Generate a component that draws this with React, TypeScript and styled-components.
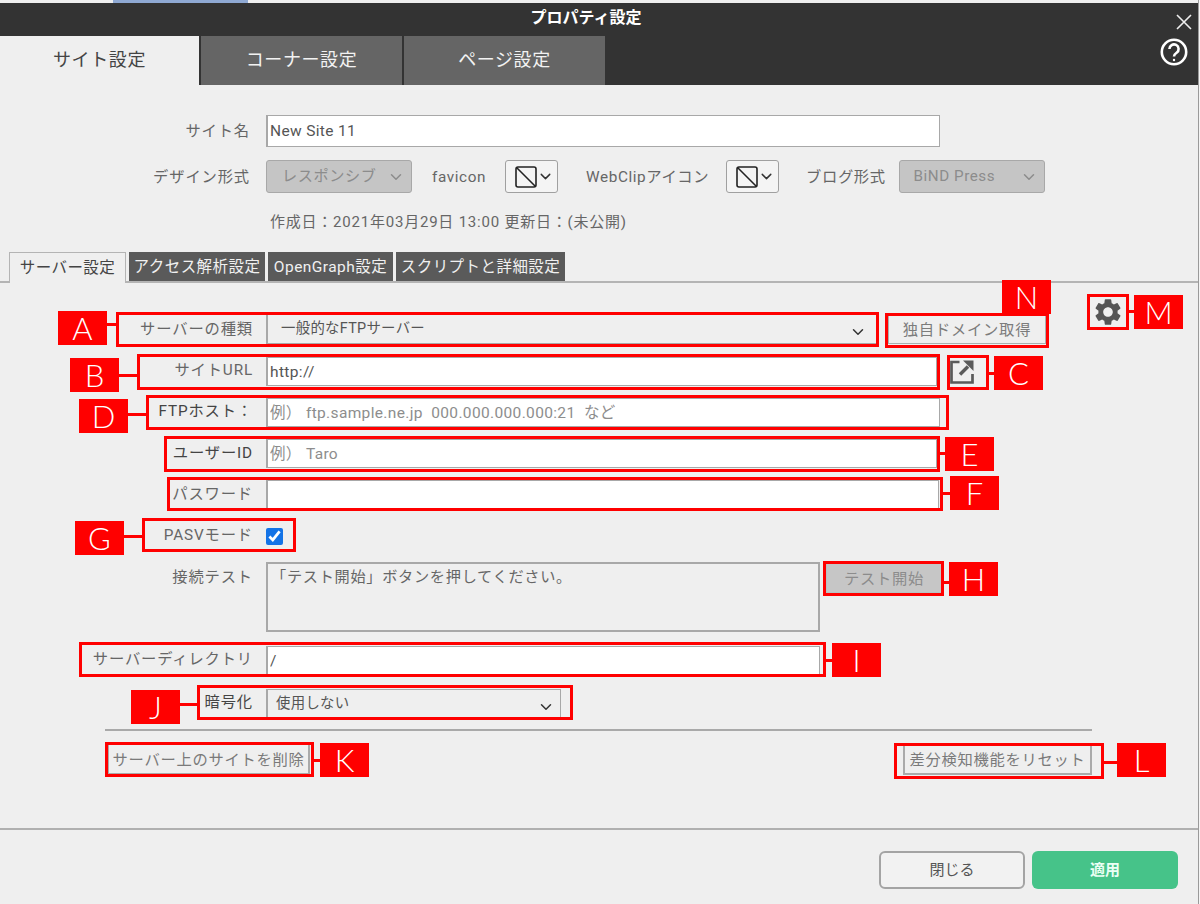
import React, { FC } from "react";
import styled, { createGlobalStyle } from "styled-components";
import { ChevronDown } from "lucide-react";
import { MdSettings } from "react-icons/md";

const FONT = `Roboto, "Noto Sans CJK JP", "Noto Sans", sans-serif`;

const GlobalStyle = createGlobalStyle`
  html, body {
    margin: 0;
    padding: 0;
    background: #f4f4f4;
  }
  * {
    box-sizing: border-box;
  }
`;

const Page = styled.div`
  position: relative;
  width: 1199px;
  height: 904px;
  overflow: hidden;
  background: #efefef;
  border-right: 1px solid #9a9a9a;
  font-family: ${FONT};
  font-size: 15px;
  color: #555;
`;

const TopStrip = styled.div`
  height: 3px;
  background: #efefef;
  padding-left: 113px;
`;

const StripMark = styled.div`
  width: 135px;
  height: 100%;
  background: #8fa9d3;
`;

const Header = styled.header`
  height: 82px;
  background: #333;
`;

const TitleRow = styled.div`
  height: 33px;
  display: grid;
  grid-template-columns: 1fr auto 1fr;
  align-items: center;
  padding-right: 6px;
`;

const Title = styled.div`
  color: #fff;
  font-size: 16px;
  font-weight: 700;
  line-height: 20px;
  padding-bottom: 4px;
  margin-left: -20px;
`;

const CloseIcon = styled.svg`
  justify-self: end;
  width: 16px;
  height: 16px;
  margin-top: 5px;
`;

const TabRow = styled.div`
  height: 49px;
  display: flex;
  gap: 2px;
`;

const MainTab = styled.div<{ $active?: boolean }>`
  width: ${(p) => (p.$active ? 199 : 201)}px;
  display: flex;
  align-items: center;
  justify-content: center;
  padding-bottom: 5px;
  font-size: 18px;
  letter-spacing: 0.6px;
  background: ${(p) => (p.$active ? "#efefef" : "#656565")};
  color: ${(p) => (p.$active ? "#444" : "#f2f2f2")};
`;

const HelpIcon = styled.svg`
  width: 28px;
  height: 28px;
  margin: 2px 10px 0 auto;
`;

const SiteSection = styled.section`
  padding-top: 30px;
  height: 167px;
`;

const Field = styled.div<{ $top?: number }>`
  display: grid;
  grid-template-columns: 250px 1fr;
  column-gap: 16px;
  align-items: center;
  margin-top: ${(p) => p.$top ?? 0}px;
`;

const PanelField = styled(Field)`
  grid-template-columns: 253px 1fr;
  column-gap: 13px;
`;

const Label = styled.label<{ $dark?: boolean; $start?: boolean; $lift?: number }>`
  text-align: right;
  white-space: nowrap;
  font-size: 15.3px;
  line-height: 18px;
  letter-spacing: 0.85px;
  padding-bottom: ${(p) => p.$lift ?? 4}px;
  align-self: ${(p) => (p.$start ? "start" : "auto")};
  padding-top: ${(p) => (p.$start ? 6 : 0)}px;
  color: ${(p) => (p.$dark ? "#444" : "#666")};
`;

const TextInput = styled.input<{ $w: number; $h?: number }>`
  display: block;
  width: ${(p) => p.$w}px;
  height: ${(p) => p.$h ?? 29}px;
  padding: 0 2px;
  background: #fff;
  border: 1px solid #a8a8a8;
  border-left-width: 2px;
  border-radius: 0;
  outline: none;
  font-family: ${FONT};
  font-size: 15.5px;
  letter-spacing: 0.35px;
  color: #555;

  &::placeholder {
    color: #8d8d8d;
    opacity: 1;
  }
`;

const Controls = styled.div`
  display: flex;
  align-items: center;
`;

const InlineLabel = styled.span<{ $left: number }>`
  margin-left: ${(p) => p.$left}px;
  white-space: nowrap;
  font-size: 15.3px;
  line-height: 18px;
  letter-spacing: 0.6px;
  color: #666;
`;

const SelectBox = styled.div<{ $w: number; $h?: number; $disabled?: boolean; $pad?: number; $left?: number; $end?: number }>`
  display: flex;
  align-items: center;
  justify-content: space-between;
  flex: none;
  width: ${(p) => p.$w}px;
  height: ${(p) => p.$h ?? 30}px;
  margin-left: ${(p) => p.$left ?? 0}px;
  padding: 0 ${(p) => p.$end ?? (p.$disabled ? 6 : 10)}px 0 ${(p) => p.$pad ?? 13}px;
  background: ${(p) => (p.$disabled ? "#c5c5c5" : "#efefef")};
  border: 1px solid #a8a8a8;
  border-left-width: ${(p) => (p.$disabled ? 1 : 2)}px;
  border-radius: ${(p) => (p.$disabled ? 3 : 0)}px;
  font-size: ${(p) => (p.$disabled ? 15.2 : 14.4)}px;
  letter-spacing: ${(p) => (p.$disabled ? 0.55 : 0.3)}px;
  color: ${(p) => (p.$disabled ? "#8c8c8c" : "#555")};

  span {
    line-height: 18px;
    padding-bottom: ${(p) => (p.$disabled ? 2 : 0)}px;
  }

  svg {
    margin-top: ${(p) => (p.$disabled ? 1 : 5)}px;
  }
`;

const IconSelect = styled.div<{ $left: number }>`
  display: flex;
  align-items: center;
  justify-content: space-between;
  flex: none;
  width: 53px;
  height: 33px;
  margin-left: ${(p) => p.$left}px;
  padding: 0 3px 0 9px;
  background: #f4f4f4;
  border: 1px solid #a0a0a0;
  border-radius: 3px;
`;

const Swatch = styled.svg`
  width: 22px;
  height: 22px;
`;

const DateLine = styled.div`
  margin: 17px 0 0 270px;
  font-size: 15px;
  letter-spacing: 0.78px;
  color: #666;
`;

const SubTabRow = styled.nav`
  height: 31px;
  display: flex;
  align-items: flex-end;
  padding-left: 9px;
  border-bottom: 2px solid #b4b4b4;
`;

const SubTab = styled.div<{ $w: number; $active?: boolean; $gap?: number }>`
  display: flex;
  align-items: center;
  justify-content: center;
  width: ${(p) => p.$w}px;
  height: ${(p) => (p.$active ? 31 : 29)}px;
  margin-left: ${(p) => p.$gap ?? 3}px;
  margin-bottom: ${(p) => (p.$active ? -2 : 0)}px;
  padding-bottom: 4px;
  white-space: nowrap;
  font-size: 15.5px;
  letter-spacing: 0.45px;
  background: ${(p) => (p.$active ? "#efefef" : "#5a5a5a")};
  color: ${(p) => (p.$active ? "#444" : "#f0f0f0")};
  border: ${(p) => (p.$active ? "1px solid #b4b4b4" : "none")};
  border-bottom: none;
`;

const ServerPanel = styled.section`
  padding-top: 31px;
`;

const TypeButton = styled.button`
  flex: none;
  width: 158px;
  height: 30px;
  margin-left: 10px;
  padding: 0 0 3px;
  background: #efefef;
  border: 1px solid #a8b0b0;
  font-family: ${FONT};
  font-size: 15.3px;
  letter-spacing: 0.75px;
  color: #7c7c7c;
`;

const GearButton = styled.div`
  display: flex;
  flex: none;
  margin: -35px 0 0 46px;
  color: #555;
  font-size: 32px;
`;

const ExternalIcon = styled.svg`
  flex: none;
  width: 24px;
  height: 24px;
  margin-left: 13px;
`;

const Check = styled.input`
  display: block;
  width: 17px;
  height: 17px;
  margin: 0;
  accent-color: #1473e6;
`;

const StatusBox = styled.div`
  width: 554px;
  height: 70px;
  padding: 0 3px;
  background: #efefef;
  border: 2px solid #a8a8a8;
  font-size: 15.2px;
  letter-spacing: 0.7px;
  color: #666;
`;

const TestButton = styled.button`
  flex: none;
  width: 116px;
  height: 30px;
  margin: 1px 0 0 6px;
  padding: 0 0 3px;
  align-self: flex-start;
  background: #c6c6c6;
  border: 1px solid #b6c4c4;
  font-family: ${FONT};
  font-size: 15.3px;
  letter-spacing: 0.75px;
  color: #8c8c8c;
`;

const Divider = styled.hr`
  width: 987px;
  height: 2px;
  margin: 10px 0 0 105px;
  background: #a9a9a9;
  border: none;
`;

const ActionRow = styled.div`
  display: flex;
  justify-content: space-between;
  margin: 14px 106px 0 107px;
`;

const ActionButton = styled.button<{ $w: number }>`
  width: ${(p) => p.$w}px;
  height: 30px;
  padding: 0 0 3px;
  background: #efefef;
  border: 1px solid #aaa;
  border-width: 0 2px 2px 2px;
  font-family: ${FONT};
  font-size: 15.3px;
  letter-spacing: 0.7px;
  color: #7a7a7a;
`;

const Footer = styled.footer`
  display: flex;
  justify-content: flex-end;
  gap: 7px;
  margin-top: 53px;
  padding: 21px 20px 0 0;
  border-top: 2px solid #b0b0b0;
`;

const FooterButton = styled.button<{ $primary?: boolean }>`
  width: 146px;
  height: 38px;
  padding: 0 0 3px;
  border-radius: 6px;
  font-family: ${FONT};
  font-size: 15px;
  font-weight: ${(p) => (p.$primary ? 700 : 400)};
  background: ${(p) => (p.$primary ? "#46c389" : "#f2f2f2")};
  border: ${(p) => (p.$primary ? "none" : "2px solid #a4a4a4")};
  color: ${(p) => (p.$primary ? "#eafff4" : "#555")};
`;

/* red call-outs drawn over the screenshot */
const MarkBox = styled.div<{ $x: number; $y: number; $w: number; $h: number }>`
  position: absolute;
  left: ${(p) => p.$x}px;
  top: ${(p) => p.$y}px;
  width: ${(p) => p.$w}px;
  height: ${(p) => p.$h}px;
  border: 3px solid #f00;
  pointer-events: none;
`;

const MarkTag = styled.div<{ $x: number; $y: number }>`
  position: absolute;
  left: ${(p) => p.$x}px;
  top: ${(p) => p.$y}px;
  width: 49px;
  height: 34px;
  display: flex;
  align-items: center;
  justify-content: center;
  background: #f00;
  color: #fff;
  font-family: Lato, "Noto Sans", sans-serif;
  font-size: 31px;
  font-weight: 300;
  line-height: 1;
`;

const MarkLine = styled.div<{ $x: number; $y: number; $w: number }>`
  position: absolute;
  left: ${(p) => p.$x}px;
  top: ${(p) => p.$y}px;
  width: ${(p) => p.$w}px;
  height: 3px;
  background: #f00;
`;

type Mark = {
  letter: string;
  box: [number, number, number, number];
  tag: [number, number];
  line?: [number, number, number];
};

const MARKS: Mark[] = [
  { letter: "A", box: [116, 312, 763, 35], tag: [58, 311], line: [107, 323, 10] },
  { letter: "B", box: [137, 354, 803, 36], tag: [70, 358], line: [118, 374, 20] },
  { letter: "C", box: [947, 355, 42, 35], tag: [994, 356], line: [988, 372, 7] },
  { letter: "D", box: [146, 395, 803, 35], tag: [79, 399], line: [128, 413, 19] },
  { letter: "E", box: [164, 436, 776, 36], tag: [945, 437], line: [939, 452, 7] },
  { letter: "F", box: [167, 477, 776, 34], tag: [950, 476], line: [942, 492, 9] },
  { letter: "G", box: [142, 518, 154, 34], tag: [75, 521], line: [124, 535, 19] },
  { letter: "H", box: [823, 561, 121, 35], tag: [949, 562], line: [943, 581, 7] },
  { letter: "I", box: [79, 642, 747, 35], tag: [832, 643], line: [825, 659, 8] },
  { letter: "J", box: [197, 685, 376, 35], tag: [131, 690], line: [179, 703, 19] },
  { letter: "K", box: [105, 742, 209, 35], tag: [320, 743], line: [313, 759, 8] },
  { letter: "L", box: [894, 743, 210, 36], tag: [1117, 743], line: [1103, 761, 15] },
  { letter: "M", box: [1087, 294, 42, 36], tag: [1134, 295], line: [1128, 310, 7] },
  { letter: "N", box: [885, 313, 164, 35], tag: [1002, 280] },
];

const Marks: FC = () => (
  <>
    {MARKS.map((m) => (
      <React.Fragment key={m.letter}>
        <MarkBox $x={m.box[0]} $y={m.box[1]} $w={m.box[2]} $h={m.box[3]} />
        {m.line && <MarkLine $x={m.line[0]} $y={m.line[1]} $w={m.line[2]} />}
        <MarkTag $x={m.tag[0]} $y={m.tag[1]}>
          {m.letter}
        </MarkTag>
      </React.Fragment>
    ))}
  </>
);

const EmptyImage: FC = () => (
  <Swatch viewBox="0 0 22 22" fill="none" stroke="#222" strokeWidth="1.6">
    <rect x="1" y="1" width="20" height="20" rx="2" />
    <path d="M1.5 1.5 20.5 20.5" />
  </Swatch>
);

const App: FC = () => {
  return (
    <Page>
      <GlobalStyle />
      <TopStrip>
        <StripMark />
      </TopStrip>

      <Header>
        <TitleRow>
          <span />
          <Title>プロパティ設定</Title>
          <CloseIcon viewBox="0 0 16 16" stroke="#eee" strokeWidth="1.6">
            <path d="M1 1 15 15M15 1 1 15" />
          </CloseIcon>
        </TitleRow>
        <TabRow>
          <MainTab $active>サイト設定</MainTab>
          <MainTab>コーナー設定</MainTab>
          <MainTab>ページ設定</MainTab>
          <HelpIcon viewBox="0 0 28 28" fill="none" stroke="#fff" strokeWidth="2.6">
            <circle cx="14" cy="14" r="12.2" />
            <path d="M9.4 11a4.6 4.6 0 1 1 7.2 3.8c-1.6 1.1-2.6 1.9-2.6 3.7" />
            <circle cx="14" cy="22" r="1.2" fill="#fff" stroke="none" />
          </HelpIcon>
        </TabRow>
      </Header>

      <SiteSection>
        <Field>
          <Label $lift={0}>サイト名</Label>
          <TextInput $w={674} $h={32} readOnly value="New Site 11" />
        </Field>
        <Field $top={13}>
          <Label $lift={0}>デザイン形式</Label>
          <Controls>
            <SelectBox $w={146} $h={33} $disabled $pad={15}>
              <span>レスポンシブ</span>
              <ChevronDown size={18} color="#8c8c8c" />
            </SelectBox>
            <InlineLabel $left={20}>favicon</InlineLabel>
            <IconSelect $left={19}>
              <EmptyImage />
              <ChevronDown size={17} color="#333" />
            </IconSelect>
            <InlineLabel $left={28}>WebClipアイコン</InlineLabel>
            <IconSelect $left={17}>
              <EmptyImage />
              <ChevronDown size={17} color="#333" />
            </IconSelect>
            <InlineLabel $left={27}>ブログ形式</InlineLabel>
            <SelectBox $w={146} $h={33} $disabled $left={13} $pad={14}>
              <span>BiND Press</span>
              <ChevronDown size={18} color="#8c8c8c" />
            </SelectBox>
          </Controls>
        </Field>
        <DateLine>作成日：2021年03月29日 13:00 更新日：(未公開)</DateLine>
      </SiteSection>

      <SubTabRow>
        <SubTab $w={117} $active $gap={0}>サーバー設定</SubTab>
        <SubTab $w={136}>アクセス解析設定</SubTab>
        <SubTab $w={125}>OpenGraph設定</SubTab>
        <SubTab $w={169}>スクリプトと詳細設定</SubTab>
      </SubTabRow>

      <ServerPanel>
        <PanelField>
          <Label $lift={0}>サーバーの種類</Label>
          <Controls>
            <SelectBox $w={612}>
              <span>一般的なFTPサーバー</span>
              <ChevronDown size={18} color="#333" />
            </SelectBox>
            <TypeButton>独自ドメイン取得</TypeButton>
            <GearButton>
              <MdSettings />
            </GearButton>
          </Controls>
        </PanelField>
        <PanelField $top={13}>
          <Label>サイトURL</Label>
          <Controls>
            <TextInput $w={671} readOnly value="http://" />
            <ExternalIcon viewBox="0 0 24 24" fill="none" stroke="#5a5a5a" strokeWidth="2.7">
              <path d="M9.5 2H1.5v20.5h21V14" />
              <path d="M10 14.5 18 6.5" strokeWidth="3.4" />
              <path d="M13 .5h10.5V11z" fill="#5a5a5a" stroke="none" />
            </ExternalIcon>
          </Controls>
        </PanelField>
        <PanelField $top={12}>
          <Label $dark>FTPホスト：</Label>
          <TextInput $w={674} readOnly placeholder="例） ftp.sample.ne.jp  000.000.000.000:21  など" />
        </PanelField>
        <PanelField $top={12}>
          <Label $dark $lift={2}>ユーザーID</Label>
          <TextInput $w={671} readOnly placeholder="例） Taro" />
        </PanelField>
        <PanelField $top={12}>
          <Label $lift={2}>パスワード</Label>
          <TextInput $w={673} readOnly type="text" />
        </PanelField>
        <PanelField $top={17}>
          <Label $lift={2}>PASVモード</Label>
          <Check type="checkbox" readOnly checked />
        </PanelField>
        <PanelField $top={16}>
          <Label $start>接続テスト</Label>
          <Controls>
            <StatusBox>「テスト開始」ボタンを押してください。</StatusBox>
            <TestButton>テスト開始</TestButton>
          </Controls>
        </PanelField>
        <PanelField $top={14}>
          <Label>サーバーディレクトリ</Label>
          <TextInput $w={554} readOnly value="/" />
        </PanelField>
        <PanelField $top={14}>
          <Label $dark>暗号化</Label>
          <SelectBox $w={295} $pad={8} $end={5}>
            <span>使用しない</span>
            <ChevronDown size={18} color="#333" />
          </SelectBox>
        </PanelField>
        <Divider />
        <ActionRow>
          <ActionButton $w={203}>サーバー上のサイトを削除</ActionButton>
          <ActionButton $w={189}>差分検知機能をリセット</ActionButton>
        </ActionRow>
        <Footer>
          <FooterButton>閉じる</FooterButton>
          <FooterButton $primary>適用</FooterButton>
        </Footer>
      </ServerPanel>

      <Marks />
    </Page>
  );
};

export default App;
